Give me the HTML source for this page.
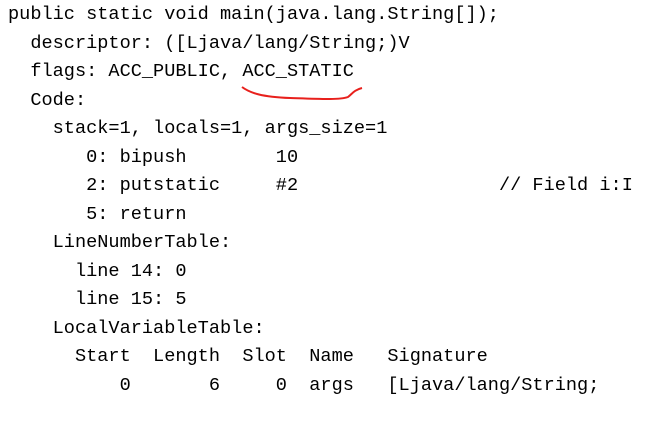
<!DOCTYPE html>
<html><head><meta charset="utf-8"><style>
html,body{margin:0;padding:0;background:#fff;width:653px;height:426px;overflow:hidden}
pre{position:absolute;left:8px;top:1px;margin:0;font-family:"Liberation Mono",monospace;font-size:18.6px;line-height:28.5px;color:#000}
svg{position:absolute;left:0;top:0}
</style></head><body>
<pre>public static void main(java.lang.String[]);
  descriptor: ([Ljava/lang/String;)V
  flags: ACC_PUBLIC, ACC_STATIC
  Code:
    stack=1, locals=1, args_size=1
       0: bipush        10
       2: putstatic     #2                  // Field i:I
       5: return
    LineNumberTable:
      line 14: 0
      line 15: 5
    LocalVariableTable:
      Start  Length  Slot  Name   Signature
          0       6     0  args   [Ljava/lang/String;</pre>
<svg width="653" height="426"><path d="M242 87 C250 93 262 97 290 98 C320 99 340 100 348 97 C352 94 354 90 362 88" fill="none" stroke="#e8201c" stroke-width="2"/></svg>
</body></html>
